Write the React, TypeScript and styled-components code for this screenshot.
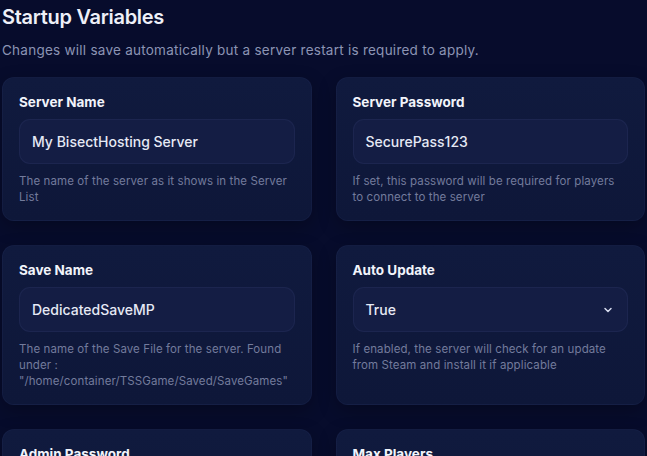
import React from 'react'
import styled, { createGlobalStyle } from 'styled-components'

const GlobalStyle = createGlobalStyle`
  html, body {
    margin: 0;
    padding: 0;
    background: #070c2c;
    overflow: hidden;
  }
  * {
    box-sizing: border-box;
  }
`

type Variable = {
  label: string
  value: string
  hint: string
  select?: boolean
}

const variables: Variable[] = [
  {
    label: 'Server Name',
    value: 'My BisectHosting Server',
    hint: 'The name of the server as it shows in the Server List',
  },
  {
    label: 'Server Password',
    value: 'SecurePass123',
    hint: 'If set, this password will be required for players to connect to the server',
  },
  {
    label: 'Save Name',
    value: 'DedicatedSaveMP',
    hint: 'The name of the Save File for the server. Found under : "/home/container/TSSGame/Saved/SaveGames"',
  },
  {
    label: 'Auto Update',
    value: 'True',
    hint: 'If enabled, the server will check for an update from Steam and install it if applicable',
    select: true,
  },
  {
    label: 'Admin Password',
    value: 'AdminPass456',
    hint: 'Password used to access admin commands in game',
  },
  {
    label: 'Max Players',
    value: '8',
    hint: 'The maximum number of players allowed on the server',
  },
]

export default function App() {
  return (
    <>
      <GlobalStyle />
      <Page>
        <Title>Startup Variables</Title>
        <Subtitle>
          Changes will save automatically but a server restart is required to apply.
        </Subtitle>

        <Grid>
          {variables.map((v) => (
            <Card key={v.label}>
              <Label>{v.label}</Label>
              <Field>
                <FieldValue>{v.value}</FieldValue>
                {v.select && (
                  <svg width='12' height='12' viewBox='0 0 24 24' fill='none'>
                    <path
                      d='M6 9l6 6 6-6'
                      stroke='#d6dbee'
                      strokeWidth='3'
                      strokeLinecap='round'
                      strokeLinejoin='round'
                    />
                  </svg>
                )}
              </Field>
              <Hint>{v.hint}</Hint>
            </Card>
          ))}
        </Grid>
      </Page>
    </>
  )
}

const Page = styled.main`
  padding: 4px 2px 0;
  font-family: Inter, 'Noto Sans', sans-serif;
  color: #e8ebf6;
`

const Title = styled.h1`
  margin: 0;
  font-size: 20px;
  line-height: 26px;
  font-weight: 600;
  letter-spacing: -0.3px;
  color: #eef0f8;
`

const Subtitle = styled.p`
  margin: 11px 0 18px;
  font-size: 13.5px;
  line-height: 18px;
  letter-spacing: 0.25px;
  color: #8c94b4;
`

const Grid = styled.div`
  display: grid;
  grid-template-columns: minmax(0, 1fr) minmax(0, 1fr);
  gap: 24px 24px;
`

const Card = styled.section`
  display: flex;
  flex-direction: column;
  min-width: 0;
  padding: 16px 16px 15px;
  border-radius: 12px;
  background: linear-gradient(180deg, #101a3e 0%, #0e1739 100%);
  border: 1px solid rgba(120, 140, 220, 0.05);
  box-shadow: 0 6px 18px rgba(0, 0, 0, 0.25);
`

const Label = styled.div`
  font-size: 13.5px;
  line-height: 16px;
  font-weight: 700;
  color: #f2f4fb;
`

const Field = styled.div`
  display: flex;
  align-items: center;
  justify-content: space-between;
  margin-top: 9px;
  height: 45px;
  padding: 0 13px 0 12px;
  border-radius: 11px;
  background: #141d44;
  border: 1px solid rgba(140, 160, 230, 0.07);
`

const FieldValue = styled.span`
  font-size: 14px;
  font-weight: 500;
  color: #e6e9f5;
`

const Hint = styled.p`
  margin: 9px 0 0;
  font-size: 11.5px;
  line-height: 16px;
  letter-spacing: 0.1px;
  color: #737b9c;
`
